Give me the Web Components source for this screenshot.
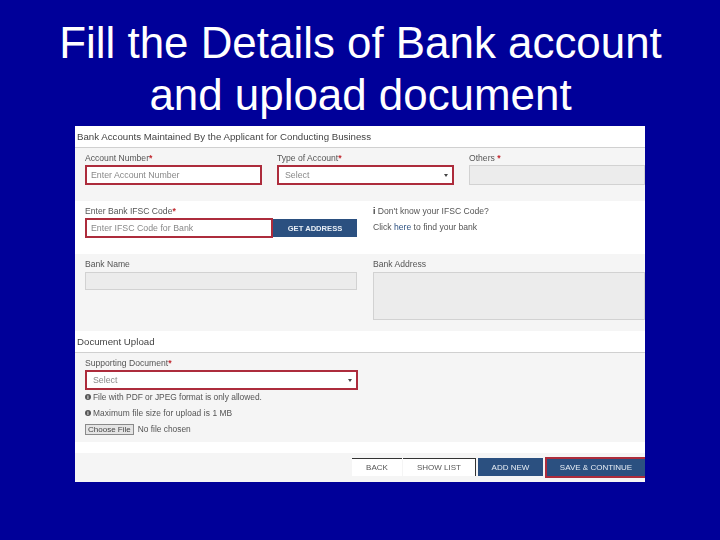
<!DOCTYPE html>
<html>
<head>
<meta charset="utf-8">
<title>Bank account</title>
<style>
  html, body { margin: 0; padding: 0; background: #000099; }
  body { width: 720px; height: 540px; overflow: hidden; font-family: "Liberation Sans", Arial, sans-serif; }
</style>
</head>
<body>
<slide-page>
  <span slot="title">Fill the Details of Bank account<br>and upload document</span>

  <panel-head>Bank Accounts Maintained By the Applicant for Conducting Business</panel-head>
  <form-band h="53" tone="grey" cols="177px 177px 176px" gap="15px">
    <form-field label="Account Number" req>
      <text-box hl text="Enter Account Number"></text-box>
    </form-field>
    <form-field label="Type of Account" req>
      <text-box hl select text="Select"></text-box>
    </form-field>
    <form-field label="Others " req>
      <text-box disabled></text-box>
    </form-field>
  </form-band>
  <form-band h="53" tone="white" cols="272px 272px" gap="16px">
    <form-field label="Enter Bank IFSC Code" req>
      <div style="display:flex;align-items:center">
        <text-box hl text="Enter IFSC Code for Bank" style="width:188px"></text-box>
        <blue-btn w="84" h="18" style="font-weight:bold;font-size:7.6px">GET ADDRESS</blue-btn>
      </div>
    </form-field>
    <ifsc-help></ifsc-help>
  </form-band>
  <form-band h="77" tone="grey" cols="272px 272px" gap="16px">
    <form-field label="Bank Name">
      <text-box disabled h="18" style="margin-top:1px"></text-box>
    </form-field>
    <form-field label="Bank Address">
      <text-box disabled h="48" style="margin-top:1px"></text-box>
    </form-field>
  </form-band>

  <panel-head>Document Upload</panel-head>
  <form-band h="89" tone="grey" cols="273px">
    <form-field label="Supporting Document" req>
      <text-box hl select text="Select" indent="8"></text-box>
      <upload-notes></upload-notes>
    </form-field>
  </form-band>
  <form-band h="11" tone="white"></form-band>
  <action-bar></action-bar>
</slide-page>

<script>
class SlidePage extends HTMLElement {
  connectedCallback() {
    this.attachShadow({ mode: 'open' });
    this.shadowRoot.innerHTML = `
    <style>
      :host { display: block; width: 720px; height: 540px; background: #000099; }
      .title {
        height: 126px;
        padding: 17px 0 0 1px;
        box-sizing: border-box;
        text-align: center;
        color: #fff;
        font-size: 43.9px;
        line-height: 52px;
        white-space: nowrap;
      }
      .shot {
        width: 570px;
        height: 356px;
        margin-left: 75px;
        background: #fff;
        overflow: hidden;
        filter: blur(0.5px);
      }
    </style>
    <div class="title"><slot name="title"></slot></div>
    <div class="shot"><slot></slot></div>`;
  }
}

class PanelHead extends HTMLElement {
  connectedCallback() {
    this.attachShadow({ mode: 'open' });
    this.shadowRoot.innerHTML = `
    <style>
      :host {
        display: block;
        height: 22px;
        box-sizing: border-box;
        padding: 5px 0 0 2px;
        background: #fff;
        border-bottom: 1px solid #d0d0d0;
        color: #444;
        font-size: 9.7px;
        line-height: 11px;
        white-space: nowrap;
      }
    </style>
    <slot></slot>`;
  }
}

class FormBand extends HTMLElement {
  connectedCallback() {
    this.attachShadow({ mode: 'open' });
    const h = this.getAttribute('h');
    const bg = this.getAttribute('tone') === 'grey' ? '#f5f5f5' : '#fff';
    const cols = this.getAttribute('cols') || '1fr';
    const gap = this.getAttribute('gap') || '0';
    this.shadowRoot.innerHTML = `
    <style>
      :host {
        display: grid;
        grid-template-columns: ${cols};
        column-gap: ${gap};
        align-items: start;
        height: ${h}px;
        box-sizing: border-box;
        padding: 5px 0 0 10px;
        background: ${bg};
        overflow: hidden;
      }
    </style>
    <slot></slot>`;
  }
}

class FormField extends HTMLElement {
  connectedCallback() {
    this.attachShadow({ mode: 'open' });
    const label = this.getAttribute('label');
    const req = this.hasAttribute('req');
    this.shadowRoot.innerHTML = `
    <style>
      :host { display: block; min-width: 0; color: #555; font-size: 8.6px; }
      .label { height: 12px; line-height: 11px; white-space: pre; }
      .label b { color: #c0272d; }
    </style>
    <div class="label">${label}${req ? '<b>*</b>' : ''}</div>
    <slot></slot>`;
  }
}

class TextBox extends HTMLElement {
  connectedCallback() {
    this.attachShadow({ mode: 'open' });
    const text = this.getAttribute('text') || '';
    const hl = this.hasAttribute('hl');
    const disabled = this.hasAttribute('disabled');
    const select = this.hasAttribute('select');
    const h = this.getAttribute('h') || 20;
    const indent = this.getAttribute('indent') || (select ? 8 : 6);
    this.shadowRoot.innerHTML = `
    <style>
      :host {
        display: flex;
        align-items: center;
        justify-content: space-between;
        flex: none;
        height: ${h}px;
        box-sizing: border-box;
        padding: 0 4px 0 ${hl ? indent - 2 : indent}px;
        background: ${disabled ? '#ececec' : '#fff'};
        border: ${hl ? '2px solid #ad2c3c' : '1px solid #d2d2d2'};
        color: #888;
        font-size: 8.8px;
        white-space: nowrap;
      }
      .caret { width: 0; height: 0; border: 2px solid transparent; border-top: 3px solid #444; border-bottom: 0; }
    </style>
    <span>${text}</span>${select ? '<i class="caret"></i>' : ''}`;
  }
}

class BlueBtn extends HTMLElement {
  connectedCallback() {
    this.attachShadow({ mode: 'open' });
    const w = this.getAttribute('w');
    const h = this.getAttribute('h');
    this.shadowRoot.innerHTML = `
    <style>
      :host {
        display: flex;
        align-items: center;
        justify-content: center;
        flex: none;
        width: ${w}px;
        height: ${h}px;
        box-sizing: border-box;
        background: #2b5080;
        color: #e8eef5;
        font-size: 8px;
        white-space: nowrap;
      }
    </style>
    <slot></slot>`;
  }
}

class IfscHelp extends HTMLElement {
  connectedCallback() {
    this.attachShadow({ mode: 'open' });
    this.shadowRoot.innerHTML = `
    <style>
      :host { display: block; color: #555; font-size: 8.6px; line-height: 11px; white-space: nowrap; }
      .second { margin-top: 5px; }
      a { color: #2b5080; }
      b { color: #333; }
    </style>
    <div><b>i</b> Don't know your IFSC Code?</div>
    <div class="second">Click <a>here</a> to find your bank</div>`;
  }
}

class UploadNotes extends HTMLElement {
  connectedCallback() {
    this.attachShadow({ mode: 'open' });
    this.shadowRoot.innerHTML = `
    <style>
      :host { display: flex; flex-direction: column; gap: 4px; padding-top: 1px; color: #555; font-size: 8.4px; white-space: nowrap; }
      .note { display: flex; align-items: center; gap: 2px; height: 12px; }
      .dot {
        width: 6px; height: 6px; border-radius: 50%;
        background: #555; color: #fff;
        font: bold 5px/6px "Liberation Sans", sans-serif; text-align: center;
      }
      .file { display: flex; align-items: center; gap: 4px; height: 12px; }
      .choose {
        height: 11px; line-height: 10px; padding: 0 2px; box-sizing: border-box;
        background: #e4e4e4; border: 1px solid #8a8a8a; color: #444; font-size: 8px;
      }
      .max { letter-spacing: 0.08px; }
    </style>
    <div class="note"><span class="dot">i</span>File with PDF or JPEG format is only allowed.</div>
    <div class="note max"><span class="dot">i</span>Maximum file size for upload is 1 MB</div>
    <div class="file"><span class="choose">Choose File</span><span>No file chosen</span></div>`;
  }
}

class ActionBar extends HTMLElement {
  connectedCallback() {
    this.attachShadow({ mode: 'open' });
    this.shadowRoot.innerHTML = `
    <style>
      :host {
        display: flex;
        justify-content: flex-end;
        align-items: flex-start;
        height: 29px;
        box-sizing: border-box;
        padding-top: 5px;
        background: #f5f5f5;
        font-size: 8px;
        white-space: nowrap;
      }
      .plain {
        display: flex; align-items: center; justify-content: center;
        height: 18px; box-sizing: border-box;
        background: #fff; border-top: 1px solid #333; color: #555;
      }
      .list { border-right: 1px solid #333; margin: 0 2px 0 1px; }
      .save { display: block; border: 2px solid #ad2c3c; border-right: 0; margin: -1px 0 0 2px; }
    </style>
    <div class="plain" style="width:50px">BACK</div>
    <div class="plain list" style="width:73px">SHOW LIST</div>
    <blue-btn w="65" h="18">ADD NEW</blue-btn>
    <div class="save"><blue-btn w="98" h="17">SAVE &amp; CONTINUE</blue-btn></div>`;
  }
}

customElements.define('blue-btn', BlueBtn);
customElements.define('text-box', TextBox);
customElements.define('form-field', FormField);
customElements.define('form-band', FormBand);
customElements.define('panel-head', PanelHead);
customElements.define('ifsc-help', IfscHelp);
customElements.define('upload-notes', UploadNotes);
customElements.define('action-bar', ActionBar);
customElements.define('slide-page', SlidePage);
</script>
</body>
</html>
